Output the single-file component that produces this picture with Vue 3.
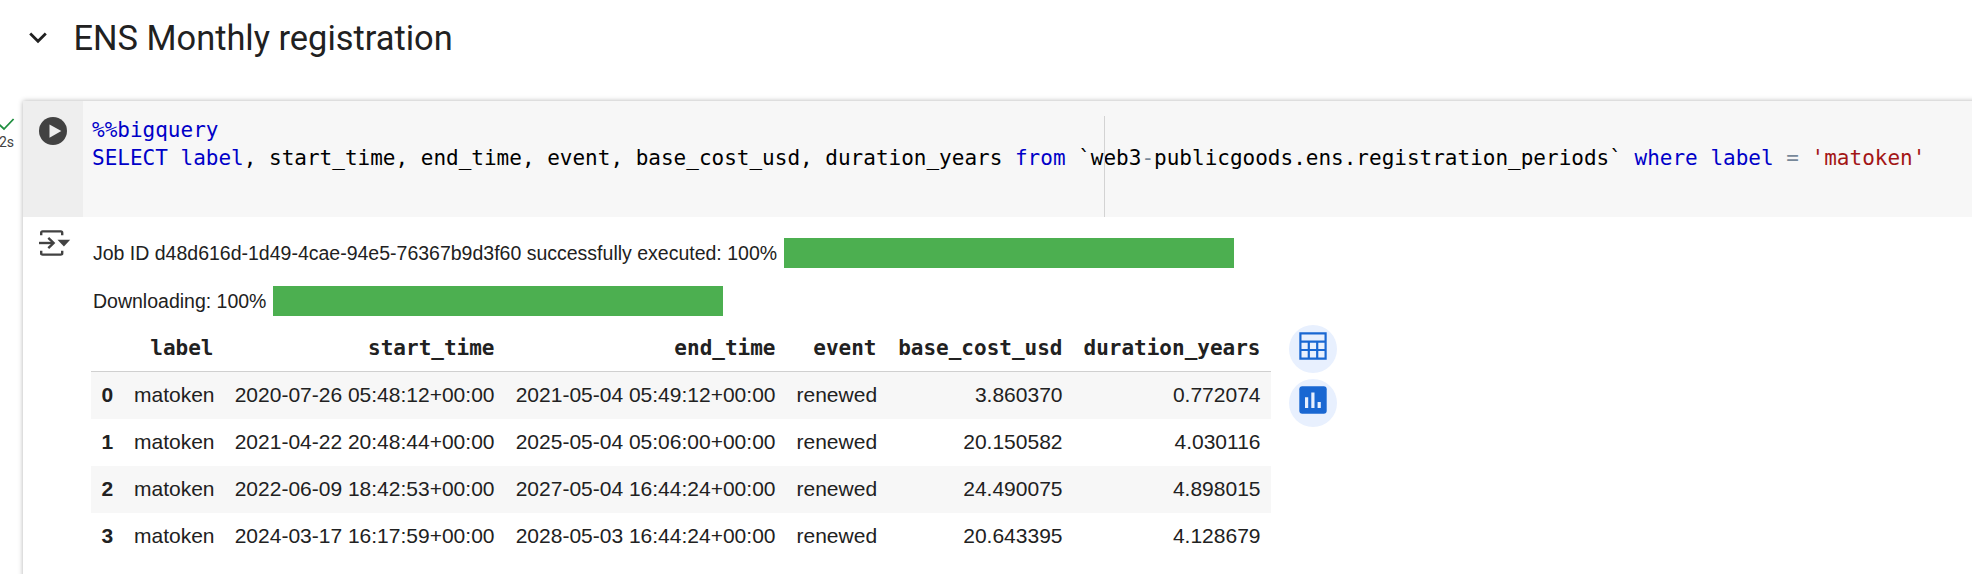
<script setup>
const codeLines = [
  [{ text: '%%bigquery', type: 'keyword' }],
  [
    { text: 'SELECT', type: 'keyword' },
    { text: ' ' },
    { text: 'label', type: 'keyword' },
    { text: ', start_time, end_time, event, base_cost_usd, duration_years ' },
    { text: 'from', type: 'keyword' },
    { text: ' `web3' },
    { text: '-', type: 'operator' },
    { text: 'publicgoods.ens.registration_periods` ' },
    { text: 'where', type: 'keyword' },
    { text: ' ' },
    { text: 'label', type: 'keyword' },
    { text: ' ' },
    { text: '=', type: 'operator' },
    { text: ' ' },
    { text: "'matoken'", type: 'string' }
  ]
]

const jobs = [
  { text: 'Job ID d48d616d-1d49-4cae-94e5-76367b9d3f60 successfully executed: 100%', name: 'query' },
  { text: 'Downloading: 100%', name: 'download' }
]

const columns = ['label', 'start_time', 'end_time', 'event', 'base_cost_usd', 'duration_years']

const rows = [
  ['matoken', '2020-07-26 05:48:12+00:00', '2021-05-04 05:49:12+00:00', 'renewed', '3.860370', '0.772074'],
  ['matoken', '2021-04-22 20:48:44+00:00', '2025-05-04 05:06:00+00:00', 'renewed', '20.150582', '4.030116'],
  ['matoken', '2022-06-09 18:42:53+00:00', '2027-05-04 16:44:24+00:00', 'renewed', '24.490075', '4.898015'],
  ['matoken', '2024-03-17 16:17:59+00:00', '2028-05-03 16:44:24+00:00', 'renewed', '20.643395', '4.128679']
]
</script>

<template>
  <div class="notebook">
    <header class="section-header">
      <svg class="chevron" width="18" height="12" viewBox="0 0 18 12">
        <path d="M1.2 1.6 L9 9.3 L16.8 1.6" fill="none" stroke="#212121" stroke-width="2.8" />
      </svg>
      <h1 class="title">ENS Monthly registration</h1>
    </header>

    <div class="cell-row">
      <div class="status">
        <svg width="15" height="13" viewBox="0 0 15 13">
          <path d="M-1 6.2 L4 11 L13.6 1" fill="none" stroke="#1e8e3e" stroke-width="1.8" />
        </svg>
        <span class="duration">2s</span>
      </div>

      <section class="cell">
        <div class="input">
          <div class="gutter">
            <svg width="28" height="28" viewBox="0 0 28 28">
              <circle cx="14" cy="14" r="14" fill="#424242" />
              <path d="M10.5 7.5 L22.3 14 L10.5 20.8 Z" fill="#eee" />
            </svg>
          </div>
          <div class="editor">
            <div v-for="(line, i) in codeLines" :key="i" class="code-line"><span
              v-for="(token, j) in line"
              :key="j"
              :class="token.type"
            >{{ token.text }}</span></div>
            <div class="ruler"></div>
          </div>
        </div>

        <div class="output">
          <div class="output-gutter">
            <svg width="33" height="26" viewBox="0 0 33 26">
              <g fill="none" stroke="#424242" stroke-width="2.4">
                <path d="M3.2 5.2 V2.8 Q3.2 1.4 4.6 1.4 H22.8 Q24.2 1.4 24.2 2.8 V5.2" />
                <path d="M3.2 20.8 V23.2 Q3.2 24.6 4.6 24.6 H22.8 Q24.2 24.6 24.2 23.2 V20.8" />
                <path d="M1 13 H15" />
                <path d="M10.3 7.8 L15.6 13 L10.3 18.2" />
              </g>
              <path d="M19.5 9.8 H32.2 L25.9 16.4 Z" fill="#424242" />
            </svg>
          </div>

          <div class="output-body">
            <div v-for="job in jobs" :key="job.name" class="job">
              <span class="job-text" :class="job.name">{{ job.text }}</span>
              <div class="bar"></div>
            </div>

            <div class="result">
              <table class="dataframe">
                <colgroup>
                  <col class="col-index">
                  <col v-for="column in columns" :key="column" :class="'col-' + column">
                </colgroup>
                <thead>
                  <tr>
                    <th></th>
                    <th v-for="column in columns" :key="column">{{ column }}</th>
                  </tr>
                </thead>
                <tbody>
                  <tr v-for="(row, i) in rows" :key="i">
                    <th>{{ i }}</th>
                    <td v-for="(value, j) in row" :key="j">{{ value }}</td>
                  </tr>
                </tbody>
              </table>

              <div class="actions">
                <button class="action" title="Interactive table">
                  <svg width="28" height="28" viewBox="0 0 28 28">
                    <path
                      d="M1.4 1.4 H26.6 V26.6 H1.4 Z M1.4 9.6 H26.6 M1.4 18 H26.6 M9.8 9.6 V26.6 M18.2 9.6 V26.6"
                      fill="none"
                      stroke="#1967d2"
                      stroke-width="2.2"
                    />
                  </svg>
                </button>
                <button class="action" title="Suggest charts">
                  <svg width="28" height="28" viewBox="0 0 28 28">
                    <rect x="0.3" y="0.3" width="27.4" height="27.4" rx="3" fill="#1967d2" />
                    <path d="M6 11.3 H9.2 V22 H6 Z M12.3 6.6 H15.5 V22 H12.3 Z M18.6 16 H21.8 V22 H18.6 Z" fill="#e8f0fe" />
                  </svg>
                </button>
              </div>
            </div>
          </div>
        </div>
      </section>
    </div>
  </div>
</template>

<style>
body {
  margin: 0;
  background: #fff;
}
</style>

<style scoped>
.notebook {
  height: 574px;
  overflow: hidden;
  display: flex;
  flex-direction: column;
  background: #fff;
  color: #212121;
  font-family: "Liberation Sans", Arial, sans-serif;
}

.section-header {
  display: flex;
  align-items: center;
  flex: none;
  height: 76px;
  margin-bottom: 24.5px;
  padding-left: 28.5px;
}

.title {
  margin: 0 0 0 27px;
  font-family: Roboto, sans-serif;
  font-size: 34.4px;
  font-weight: 400;
  line-height: 48px;
  white-space: nowrap;
}

.cell-row {
  display: flex;
  flex: 1;
}

.status {
  display: flex;
  flex-direction: column;
  flex: none;
  width: 23px;
  padding-top: 17px;
  box-sizing: border-box;
}

.duration {
  margin: 2px 0 0 -1px;
  font-family: Roboto, sans-serif;
  font-size: 14px;
  line-height: 18px;
  color: #424242;
}

.cell {
  flex: 1;
  min-width: 0;
  margin-right: -12px;
  margin-bottom: -12px;
  box-shadow: 0 0 5px rgba(0, 0, 0, 0.3);
}

.input {
  display: flex;
  height: 116px;
}

.gutter {
  flex: none;
  width: 60px;
  padding: 16px 0 0 16px;
  box-sizing: border-box;
  background: #eee;
}

.editor {
  position: relative;
  flex: 1;
  padding: 15px 0 0 9px;
  background: #f7f7f7;
}

.code-line {
  font-family: "DejaVu Sans Mono", monospace;
  font-size: 21px;
  line-height: 28.5px;
  white-space: pre;
  color: #000;
}

.keyword {
  color: #0000c8;
}

.operator {
  color: #778899;
}

.string {
  color: #a31515;
}

/* column guide, runs behind the text */
.ruler {
  position: absolute;
  top: 15px;
  bottom: 0;
  left: 1021px;
  width: 1px;
  background: #d3d3d3;
}

.output {
  display: flex;
}

.output-gutter {
  flex: none;
  width: 68px;
  padding: 13px 0 0 15px;
  box-sizing: border-box;
}

.output-body {
  padding-top: 21px;
}

.job {
  display: flex;
  height: 30px;
  margin-bottom: 18px;
}

.job-text {
  padding-left: 2px;
  box-sizing: border-box;
  font-size: 19.5px;
  line-height: 30px;
  white-space: nowrap;
}

.job-text.query {
  width: 693px;
}

.job-text.download {
  width: 182px;
}

.bar {
  width: 450px;
  background: #4caf50;
}

.result {
  display: flex;
  align-items: flex-start;
}

.dataframe {
  width: 1180px;
  margin-top: -9px;
  table-layout: fixed;
  border-collapse: collapse;
  font-size: 21px;
  line-height: 24px;
  text-align: right;
  white-space: nowrap;
}

.col-index {
  width: 32.5px;
}

.col-label {
  width: 100.5px;
}

.col-start_time,
.col-end_time {
  width: 281px;
}

.col-event {
  width: 101px;
}

.col-base_cost_usd {
  width: 186px;
}

.dataframe th,
.dataframe td {
  height: 47px;
  padding: 0 10.5px;
  box-sizing: border-box;
}

.dataframe thead th {
  font-family: "DejaVu Sans Mono", monospace;
  font-size: 21px;
  border-bottom: 1px solid #d0d0d0;
}

.dataframe tbody th {
  font-weight: 700;
}

.dataframe tbody tr:nth-child(odd) {
  background: #f7f7f7;
}

.actions {
  display: flex;
  flex-direction: column;
  gap: 6px;
  margin: -9px 0 0 18px;
}

.action {
  display: flex;
  justify-content: center;
  width: 48px;
  height: 48px;
  padding: 7px 0 0;
  border: none;
  border-radius: 50%;
  background: #e8f0fe;
  cursor: pointer;
}
</style>
